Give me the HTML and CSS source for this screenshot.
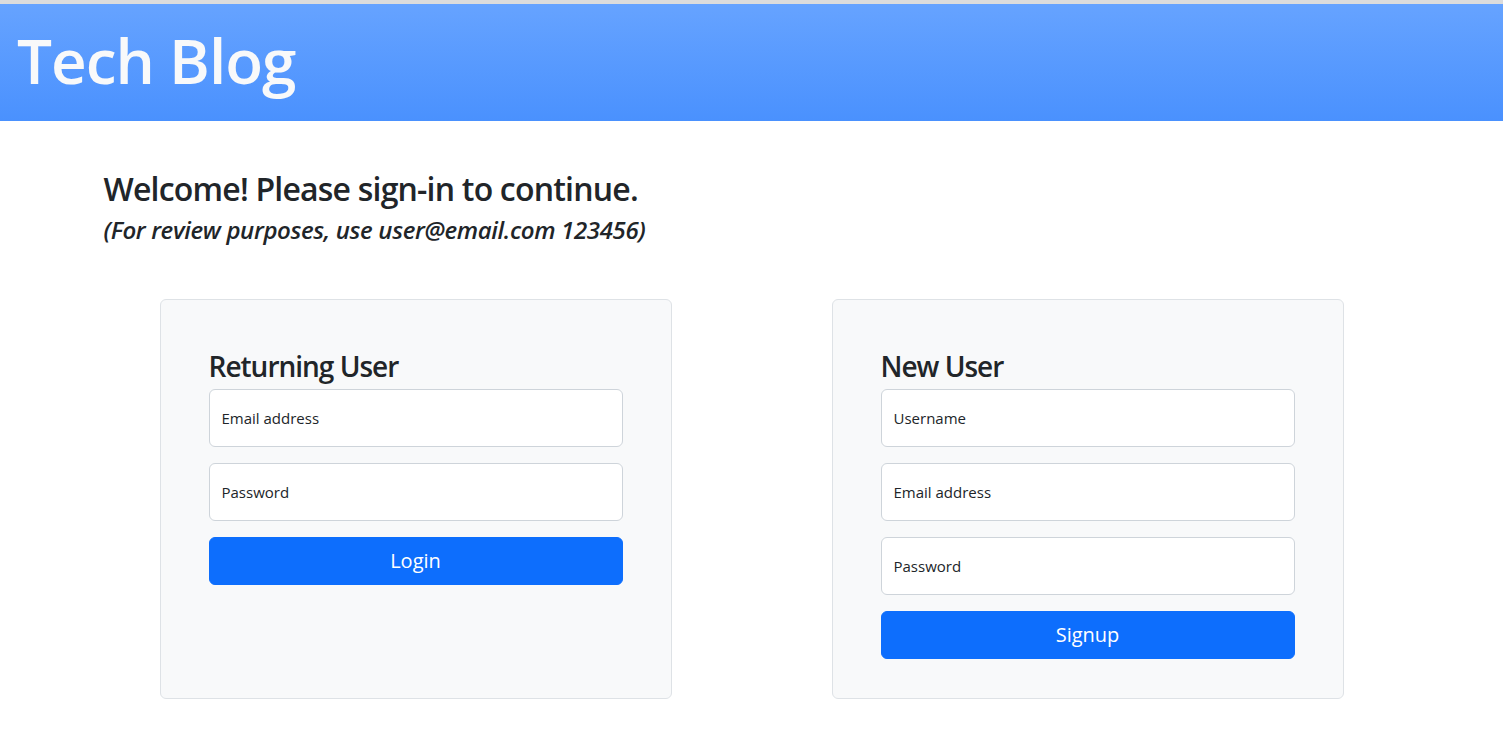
FILE: index.html
```html
<!DOCTYPE html>
<html lang="en">
<head>
<meta charset="utf-8">
<title>Tech Blog</title>
<link rel="stylesheet" href="styles.css">
</head>
<body>
<header class="site-header">
  <h1 class="site-title">Tech Blog</h1>
</header>
<main class="container">
  <h2 class="welcome">Welcome! Please sign-in to continue.</h2>
  <h4 class="note">(For review purposes, use user@email.com 123456)</h4>
  <div class="cards">
    <section class="card">
      <h3 class="card-title">Returning User</h3>
      <form class="form">
        <input class="field" type="email" placeholder="Email address">
        <input class="field" type="password" placeholder="Password">
        <button class="btn" type="button">Login</button>
      </form>
    </section>
    <section class="card">
      <h3 class="card-title">New User</h3>
      <form class="form">
        <input class="field" type="text" placeholder="Username">
        <input class="field" type="email" placeholder="Email address">
        <input class="field" type="password" placeholder="Password">
        <button class="btn" type="button">Signup</button>
      </form>
    </section>
  </div>
</main>
</body>
</html>
```

FILE: styles.css
```css
* { box-sizing: border-box; }
html, body { margin: 0; padding: 0; }
body {
  font-family: "Open Sans", "Noto Sans", sans-serif;
  color: #212529;
  background: #fff;
}
.site-header {
  border-top: 4px solid #dcdcdc;
  background: linear-gradient(to bottom, #66a3ff, #4a91fe);
  height: 121px;
  padding: 19px 17px 0;
}
.site-title {
  margin: 0;
  font-size: 62px;
  font-weight: 600;
  line-height: 1.2;
  color: #f8f9fa;
  letter-spacing: -1px;
}
.container {
  max-width: 1320px;
  margin: 0 auto;
  padding: 0 12px;
}
.welcome {
  margin: 49px 0 8px;
  font-size: 32px;
  font-weight: 600;
  line-height: 1.2;
  letter-spacing: -0.8px;
}
.note {
  margin: 0;
  font-size: 24px;
  font-weight: 600;
  font-style: italic;
  line-height: 1.2;
  letter-spacing: -0.35px;
}
.cards {
  display: flex;
  justify-content: center;
  gap: 160px;
  margin-top: 54px;
}
.card {
  width: 512px;
  background: #f8f9fa;
  border: 1px solid #dee2e6;
  border-radius: 6px;
  padding: 50px 48px 39px;
}
.card-title {
  margin: 0 0 5px;
  font-size: 28px;
  font-weight: 600;
  line-height: 1.2;
  letter-spacing: -1px;
}
.form {
  display: flex;
  flex-direction: column;
  gap: 16px;
}
.field {
  display: block;
  width: 100%;
  height: 58px;
  padding: 0 12px;
  border: 1px solid #ced4da;
  border-radius: 6px;
  background: #fff;
  font-family: inherit;
  font-size: 15px;
  color: #212529;
  outline: none;
}
.field::placeholder { color: #212529; opacity: 1; }
.btn {
  display: block;
  width: 100%;
  height: 48px;
  border: 1px solid #0d6efd;
  border-radius: 6px;
  background: #0d6efd;
  color: #fff;
  font-family: inherit;
  font-size: 20px;
  line-height: 1;
  cursor: pointer;
}
```
